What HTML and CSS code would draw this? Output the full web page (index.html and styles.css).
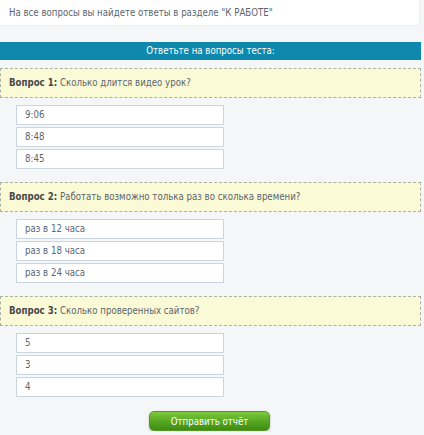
FILE: index.html
```html
<!DOCTYPE html>
<html lang="ru">
<head>
<meta charset="utf-8">
<title>Тест</title>
<link rel="stylesheet" href="styles.css">
</head>
<body>
<div class="page">
  <div class="notice">На все вопросы вы найдете ответы в разделе "К РАБОТЕ"</div>
  <div class="bar">Ответьте на вопросы теста:</div>

  <div class="question"><b>Вопрос 1:</b> Сколько длится видео урок?</div>
  <div class="answers">
    <div class="answer">9:06</div>
    <div class="answer">8:48</div>
    <div class="answer">8:45</div>
  </div>

  <div class="question"><b>Вопрос 2:</b> Работать возможно тольк&#1072; раз во скольк&#1072; времени?</div>
  <div class="answers">
    <div class="answer">раз в 12 часа</div>
    <div class="answer">раз в 18 часа</div>
    <div class="answer">раз в 24 часа</div>
  </div>

  <div class="question"><b>Вопрос 3:</b> Сколько проверенных сайтов?</div>
  <div class="answers">
    <div class="answer">5</div>
    <div class="answer">3</div>
    <div class="answer">4</div>
  </div>

  <div class="actions">
    <button class="submit" type="button">Отправить отчёт</button>
  </div>
</div>
</body>
</html>
```

FILE: styles.css
```css
html, body {
  margin: 0;
  padding: 0;
  background: #f4f6f7;
}
.page {
  width: 421px;
  font-family: "DejaVu Sans Condensed", "DejaVu Sans", sans-serif;
  font-size: 9.6px;
  color: #5b656e;
}
.notice {
  background: #ffffff;
  height: 26px;
  line-height: 26px;
  padding-left: 9px;
  box-sizing: border-box;
  border-bottom: 1px solid #eceff1;
  border-right: 1px solid #eceff1;
  width: 420px;
}
.bar {
  margin-top: 16px;
  height: 18px;
  line-height: 18px;
  background: #0e89ad;
  color: #ffffff;
  text-align: center;
}
.question {
  margin-top: 8px;
  height: 30px;
  box-sizing: border-box;
  border: 1px dashed #a9b3a5;
  background: #fbfad6;
  line-height: 28px;
  padding-left: 8px;
}
.answers + .question {
  margin-top: 13px;
}
.question b {
  color: #45494c;
}
.answers {
  margin-top: 7px;
  margin-left: 16px;
  width: 208px;
  display: flex;
  flex-direction: column;
  gap: 2px;
}
.answer {
  height: 20px;
  box-sizing: border-box;
  border: 1px solid #c9d6e0;
  background: #ffffff;
  line-height: 18px;
  padding-left: 8px;
  color: #5b6672;
}
.actions {
  display: flex;
  justify-content: center;
  margin-top: 14px;
  margin-left: -2px;
}
.submit {
  width: 121px;
  height: 20px;
  border: 1px solid #4f9a1f;
  border-radius: 5px;
  background: linear-gradient(#7ccb3e, #58a823 50%, #3d8c12);
  color: #ffffff;
  font-family: "DejaVu Sans Condensed", "DejaVu Sans", sans-serif;
  font-size: 9.6px;
  padding: 0;
  box-shadow: 0 1px 2px rgba(0,0,0,0.3);
}
```
